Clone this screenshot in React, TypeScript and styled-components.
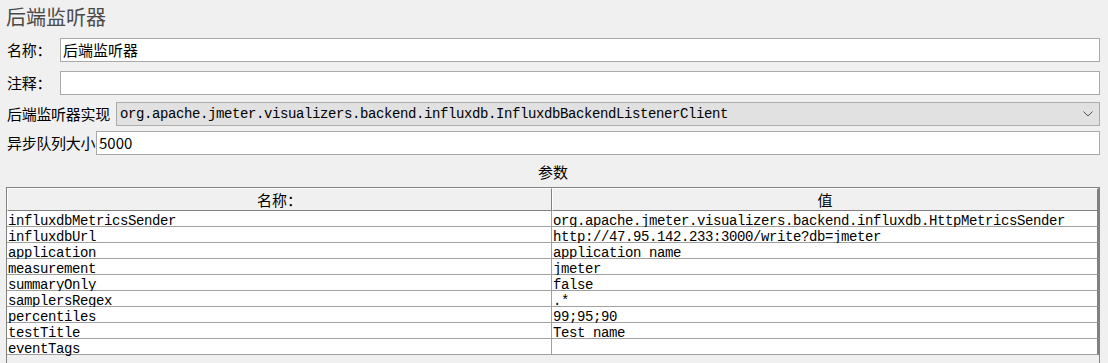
import React from 'react';
import styled, { createGlobalStyle } from 'styled-components';

const GlobalStyle = createGlobalStyle`
  html, body {
    margin: 0;
    padding: 0;
    background: #f0f0f0;
    overflow: hidden;
  }
  body {
    font-family: "Noto Sans CJK SC", "Noto Sans", sans-serif;
    color: #000;
  }
`;

const params: [string, string][] = [
  ['influxdbMetricsSender', 'org.apache.jmeter.visualizers.backend.influxdb.HttpMetricsSender'],
  ['influxdbUrl', 'http://47.95.142.233:3000/write?db=jmeter'],
  ['application', 'application name'],
  ['measurement', 'jmeter'],
  ['summaryOnly', 'false'],
  ['samplersRegex', '.*'],
  ['percentiles', '99;95;90'],
  ['testTitle', 'Test name'],
  ['eventTags', ''],
];

const Page = styled.div`
  width: 1108px;
  height: 363px;
  box-sizing: border-box;
  padding: 0 8px 0 6px;
  display: flex;
  flex-direction: column;
  overflow: hidden;
`;

const Title = styled.div`
  height: 33px;
  line-height: 33px;
  font-size: 20px;
  color: #4a4a4a;
`;

const FormRow = styled.div<{ $mt: number }>`
  display: flex;
  align-items: center;
  height: 24px;
  flex-shrink: 0;
  margin-top: ${(p) => p.$mt}px;
`;

const Label = styled.div<{ $w: number }>`
  width: ${(p) => p.$w}px;
  flex-shrink: 0;
  padding-left: 1px;
  box-sizing: border-box;
  font-size: 15px;
  line-height: 24px;
  white-space: nowrap;
  letter-spacing: -0.3px;
`;

const TextField = styled.div`
  flex: 1;
  height: 24px;
  box-sizing: border-box;
  border: 1px solid #a9a9a9;
  background: #fff;
  padding-left: 2px;
  font-size: 15px;
  line-height: 22px;
`;

const Combo = styled.div`
  flex: 1;
  height: 24px;
  box-sizing: border-box;
  border: 1px solid #adadad;
  background: #e1e1e1;
  display: flex;
  align-items: center;
  justify-content: space-between;
  padding: 0 6px 0 3px;
`;

const MonoText = styled.span`
  font-family: "Liberation Mono", monospace;
  font-size: 14px;
  letter-spacing: -0.4px;
  color: #000;
  white-space: nowrap;
`;

const Caption = styled.div`
  height: 32px;
  flex-shrink: 0;
  line-height: 34px;
  text-align: center;
  font-size: 15px;
`;

const Pane = styled.div`
  flex: 1;
  border: 1px solid #828282;
  border-bottom: none;
  background: #f0f0f0;
`;

const Grid = styled.div`
  display: grid;
  grid-template-columns: 545px 1fr;
`;

const HeadCell = styled.div<{ $last?: boolean }>`
  height: 23px;
  box-sizing: border-box;
  background: #f0f0f0;
  border-top: 1px solid #fff;
  border-left: 1px solid #fff;
  border-bottom: 1px solid #808080;
  border-right: ${(p) => (p.$last ? '2px solid #808080' : '1px solid #808080')};
  text-align: center;
  font-size: 15px;
  line-height: 21px;
`;

const Cell = styled.div<{ $last?: boolean }>`
  height: 16px;
  box-sizing: border-box;
  background: #fff;
  border-bottom: 1px solid #a0a0a0;
  border-right: ${(p) => (p.$last ? '2px solid #808080' : '1px solid #a0a0a0')};
  padding-left: 1px;
  line-height: 14px;
  white-space: nowrap;
`;

const Chevron = () => (
  <svg width="10" height="6" viewBox="0 0 10 6">
    <polyline points="0.5,0.5 5,5 9.5,0.5" fill="none" stroke="#555" strokeWidth="1" />
  </svg>
);

export default function App() {
  return (
    <>
      <GlobalStyle />
      <Page>
        <Title>后端监听器</Title>
        <FormRow $mt={5}>
          <Label $w={54}>名称：</Label>
          <TextField>后端监听器</TextField>
        </FormRow>
        <FormRow $mt={9}>
          <Label $w={54}>注释：</Label>
          <TextField />
        </FormRow>
        <FormRow $mt={7}>
          <Label $w={110}>后端监听器实现</Label>
          <Combo>
            <MonoText>org.apache.jmeter.visualizers.backend.influxdb.InfluxdbBackendListenerClient</MonoText>
            <Chevron />
          </Combo>
        </FormRow>
        <FormRow $mt={5}>
          <Label $w={90}>异步队列大小</Label>
          <TextField>5000</TextField>
        </FormRow>
        <Caption>参数</Caption>
        <Pane>
          <Grid>
            <HeadCell>名称：</HeadCell>
            <HeadCell $last>值</HeadCell>
            {params.map(([k, v]) => (
              <React.Fragment key={k}>
                <Cell>
                  <MonoText>{k}</MonoText>
                </Cell>
                <Cell $last>
                  <MonoText>{v}</MonoText>
                </Cell>
              </React.Fragment>
            ))}
          </Grid>
        </Pane>
      </Page>
    </>
  );
}
